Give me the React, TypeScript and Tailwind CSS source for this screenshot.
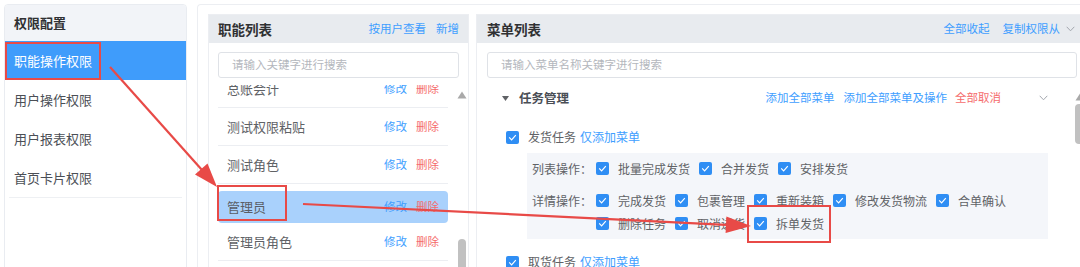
import React from "react";

function Cb() {
  return (
    <span className="w-[13px] h-[13px] rounded-[2px] bg-[#2f8ef4] flex items-center justify-center shrink-0">
      <svg width="9" height="7" viewBox="0 0 9 7">
        <path d="M1.2 3.4 L3.6 5.8 L7.8 1.2" stroke="white" strokeWidth="1.2" fill="none" />
      </svg>
    </span>
  );
}

function CbItem({ label }: { label: string }) {
  return (
    <div className="flex items-center gap-[9px] h-[23px]">
      <Cb />
      <span className="text-[12px] leading-none text-[#606266]">{label}</span>
    </div>
  );
}

function UpTri() {
  return (
    <svg width="10" height="8" viewBox="0 0 10 8">
      <polygon points="5,0.5 9.5,7.5 0.5,7.5" fill="#a9a9a9" />
    </svg>
  );
}

function Chevron() {
  return (
    <svg width="9" height="6" viewBox="0 0 9 6">
      <path d="M0.7 0.8 L4.5 4.8 L8.3 0.8" stroke="#a3a7ae" strokeWidth="1" fill="none" />
    </svg>
  );
}

function Actions() {
  return (
    <div className="flex gap-[9px] text-[11.5px]">
      <span className="text-[#409eff]">修改</span>
      <span className="text-[#f56c6c]">删除</span>
    </div>
  );
}

const roles = ["测试权限粘贴", "测试角色"];

export default function App() {
  return (
    <div className="relative w-[1080px] h-[267px] overflow-hidden bg-white font-['Noto_Sans_CJK_SC','Noto_Sans',sans-serif] flex pt-[4px] pl-[4px]">
      {/* Panel 1 */}
      <div className="w-[183px] shrink-0 h-[300px] border border-[#e9ecf1] rounded-[4px] overflow-hidden flex flex-col">
        <div className="h-[36px] shrink-0 bg-[#f2f4f8] flex items-center pl-[9px] text-[13px] font-bold text-[#303133]">
          权限配置
        </div>
        <div className="h-[39px] shrink-0 bg-[#3f9cfb] flex items-center pl-[9px] text-[13px] text-white">
          职能操作权限
        </div>
        {["用户操作权限", "用户报表权限", "首页卡片权限"].map((t) => (
          <div key={t} className="h-[39px] shrink-0 flex items-center pl-[9px] text-[13px] text-[#4b4f56]">
            {t}
          </div>
        ))}
        <div className="mx-[4px] border-t border-[#eef0f3]" />
      </div>

      {/* Outer container for panels 2 & 3 */}
      <div className="ml-[10px] shrink-0 h-[300px] border-l border-t border-[#eceef2] rounded-tl-[4px] pt-[9px] pl-[10px] flex gap-[7px]">
        {/* Panel 2 */}
        <div className="w-[261px] shrink-0 h-[290px] border border-[#eceef2] flex flex-col">
          <div className="h-[28px] shrink-0 bg-[#e8ebef] flex items-center justify-between pl-[9px] pr-[9px]">
            <span className="text-[13.5px] font-bold text-[#303133]">职能列表</span>
            <div className="flex gap-[10px] text-[11.5px] text-[#409eff]">
              <span>按用户查看</span>
              <span>新增</span>
            </div>
          </div>
          <div className="mt-[9px] mx-[9px] h-[26px] shrink-0 border border-[#dfe2e7] rounded-[3px] flex items-center pl-[13px] text-[11.5px] text-[#b4b7bd]">
            请输入关键字进行搜索
          </div>
          <div className="flex flex-1 overflow-hidden">
            <div className="w-[230px] ml-[9px] mt-[7px] overflow-hidden">
              <div className="-mt-[15px]">
                <div className="h-[38px] border-b border-[#eceef2] flex items-center justify-between px-[9px]">
                  <span className="text-[13px] text-[#606266]">总账会计</span>
                  <Actions />
                </div>
                {roles.map((r) => (
                  <div key={r} className="h-[38px] border-b border-[#eceef2] flex items-center justify-between px-[9px]">
                    <span className="text-[13px] text-[#606266]">{r}</span>
                    <Actions />
                  </div>
                ))}
                <div className="h-[39px] pt-[7px]">
                  <div className="h-[32px] rounded-[4px] bg-[#a9d1fc] flex items-center justify-between px-[9px]">
                    <span className="text-[13px] text-[#5a5e66]">管理员</span>
                    <Actions />
                  </div>
                </div>
                <div className="h-[38px] border-b border-[#eceef2] flex items-center justify-between px-[9px]">
                  <span className="text-[13px] text-[#606266]">管理员角色</span>
                  <Actions />
                </div>
              </div>
            </div>
            <div className="w-[20px] flex flex-col pl-[9px]">
              <div className="mt-[13px]">
                <UpTri />
              </div>
              <div className="mt-[140px] ml-[1px] w-[8px] h-[60px] rounded-[4px] bg-[#c1c1c1]" />
            </div>
          </div>
        </div>

        {/* Panel 3 */}
        <div className="w-[612px] shrink-0 h-[290px] border border-[#eceef2] flex flex-col">
          <div className="h-[28px] shrink-0 bg-[#e8ebef] flex items-center justify-between pl-[10px] pr-[12px]">
            <span className="text-[13.5px] font-bold text-[#303133]">菜单列表</span>
            <div className="flex items-center text-[11.5px] text-[#409eff]">
              <span>全部收起</span>
              <span className="ml-[13px]">复制权限从</span>
              <span className="ml-[6px]">
                <Chevron />
              </span>
            </div>
          </div>
          <div className="mt-[9px] mx-[10px] h-[26px] shrink-0 border border-[#dfe2e7] rounded-[3px] flex items-center pl-[13px] text-[11.5px] text-[#b4b7bd]">
            请输入菜单名称关键字进行搜索
          </div>
          <div className="flex flex-1 ml-[10px]">
            <div className="w-[588px] flex flex-col">
              <div className="mt-[5px] h-[30px] flex items-center pl-[15px] pr-[27px]">
                <svg width="7" height="5" viewBox="0 0 7 5">
                  <polygon points="0,0 7,0 3.5,5" fill="#606266" />
                </svg>
                <span className="ml-[10px] text-[12.5px] font-bold text-[#4a4e55]">任务管理</span>
                <div className="ml-auto flex items-center text-[11.5px]">
                  <span className="text-[#409eff]">添加全部菜单</span>
                  <span className="ml-[9px] text-[#409eff]">添加全部菜单及操作</span>
                  <span className="ml-[8px] text-[#f56c6c]">全部取消</span>
                  <span className="ml-[38px]">
                    <Chevron />
                  </span>
                </div>
              </div>
              <div className="mt-[12px] h-[24px] flex items-center pl-[19px]">
                <Cb />
                <span className="ml-[9px] text-[12px] text-[#606266]">发货任务</span>
                <span className="ml-[4px] text-[12px] text-[#409eff]">仅添加菜单</span>
              </div>
              <div className="mt-[4px] ml-[40px] mr-[27px] bg-[#f4f6fa] pl-[5px] py-[4px] flex flex-col gap-[9px]">
                <div className="flex">
                  <div className="w-[64px] shrink-0 h-[23px] flex items-center text-[12px] text-[#606266]">列表操作：</div>
                  <div className="flex flex-wrap gap-x-[9px]">
                    <CbItem label="批量完成发货" />
                    <CbItem label="合并发货" />
                    <CbItem label="安排发货" />
                  </div>
                </div>
                <div className="flex">
                  <div className="w-[64px] shrink-0 h-[23px] flex items-center text-[12px] text-[#606266]">详情操作：</div>
                  <div className="flex flex-wrap gap-x-[9px]">
                    <CbItem label="完成发货" />
                    <CbItem label="包裹管理" />
                    <CbItem label="重新装箱" />
                    <CbItem label="修改发货物流" />
                    <CbItem label="合单确认" />
                    <CbItem label="删除任务" />
                    <CbItem label="取消送货" />
                    <CbItem label="拆单发货" />
                  </div>
                </div>
              </div>
              <div className="mt-[11px] h-[24px] flex items-center pl-[19px]">
                <Cb />
                <span className="ml-[9px] text-[12px] text-[#606266]">取货任务</span>
                <span className="ml-[4px] text-[12px] text-[#409eff]">仅添加菜单</span>
              </div>
            </div>
            <div className="w-[10px] flex flex-col">
              <div className="mt-[15px]">
                <UpTri />
              </div>
              <div className="mt-[3px] w-[8px] h-[40px] rounded-[4px] bg-[#c1c1c1]" />
            </div>
          </div>
        </div>
      </div>

      {/* Annotation overlay */}
      <div className="absolute left-[5px] top-[42px] w-[96px] h-[38px] border-2 border-[#e84a47] pointer-events-none" />
      <div className="absolute left-[217px] top-[185px] w-[70px] h-[36px] border-2 border-[#e84a47] pointer-events-none" />
      <div className="absolute left-[747px] top-[205px] w-[84px] h-[38px] border-2 border-[#e84a47] pointer-events-none" />
      <svg className="absolute left-0 top-0 pointer-events-none" width="1080" height="267" viewBox="0 0 1080 267">
        <line x1="110" y1="67" x2="202" y2="170" stroke="#e84a47" strokeWidth="2.2" />
        <polygon points="217,187 195,174.6 207.5,163.4" fill="#e84a47" />
        <line x1="303" y1="204" x2="726" y2="224.8" stroke="#e84a47" strokeWidth="2.2" />
        <polygon points="751,226 725.6,233 726.4,216.5" fill="#e84a47" />
      </svg>
    </div>
  );
}
